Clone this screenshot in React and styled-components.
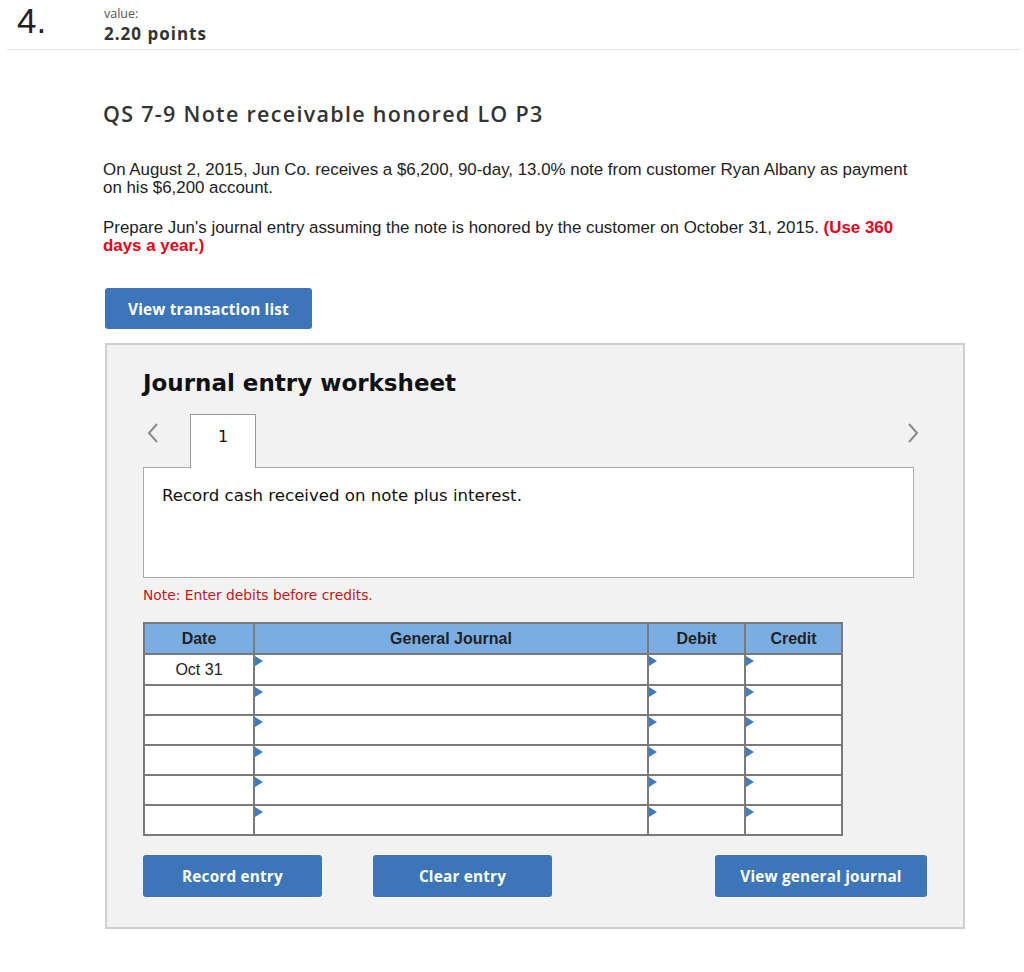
import React from "react";
import styled, { createGlobalStyle } from "styled-components";

const Global = createGlobalStyle`
  html, body { margin: 0; padding: 0; background: #fff; }
  body { font-family: "Liberation Sans", Arial, sans-serif; color: #333; }
  * { box-sizing: border-box; }
`;

const Page = styled.div`
  width: 1024px;
  min-height: 972px;
  background: #fff;
`;

const Header = styled.header`
  display: flex;
  align-items: flex-start;
  height: 50px;
  margin: 0 4px 0 7px;
  border-bottom: 1px solid #e3e3e3;
`;

const Number = styled.div`
  width: 97px;
  padding-left: 10px;
  padding-top: 2px;
  font-family: "Liberation Sans", Arial, sans-serif;
  font-size: 35px;
  line-height: 38px;
  color: #222;
`;

const ValueBox = styled.div`
  display: flex;
  flex-direction: column;
  padding-top: 6px;
`;

const ValueLabel = styled.span`
  font-family: "Open Sans", sans-serif;
  font-size: 12.5px;
  line-height: 16px;
  color: #555;
`;

const Points = styled.span`
  font-family: "Open Sans", sans-serif;
  font-weight: 700;
  font-size: 17px;
  line-height: 24px;
  letter-spacing: 1px;
  color: #333;
`;

const Main = styled.main`
  padding: 50px 0 40px 103px;
`;

const Title = styled.h2`
  margin: 0;
  font-family: "Open Sans", sans-serif;
  font-weight: 600;
  font-size: 21.5px;
  line-height: 28px;
  letter-spacing: 1.3px;
  color: #333;
`;

const Para = styled.p`
  margin: ${(p) => p.$top}px 0 0;
  width: 812px;
  font-family: "Liberation Sans", Arial, sans-serif;
  font-size: 16.9px;
  line-height: 18px;
  color: #222;
`;

const Red = styled.b`
  color: #ec0018;
`;

const Button = styled.button`
  display: inline-flex;
  align-items: center;
  justify-content: center;
  width: ${(p) => p.$w}px;
  height: ${(p) => p.$h || 42}px;
  border: none;
  border-radius: 3px;
  background: #3c76b8;
  color: #fff;
  font-family: "Open Sans", sans-serif;
  font-weight: 700;
  font-size: 15.3px;
  letter-spacing: 0.2px;
  cursor: pointer;
  padding: 0;
`;

const TopButtonWrap = styled.div`
  display: flex;
  margin: 33px 0 0 2px;
`;

const Panel = styled.section`
  margin: 14px 0 0 2px;
  width: 860px;
  background: #f2f2f2;
  border: 2px solid #cfcfcf;
  padding: 24px 36px 30px;
`;

const WsTitle = styled.h3`
  margin: 0;
  font-family: "DejaVu Sans", Verdana, sans-serif;
  font-weight: 700;
  font-size: 23px;
  line-height: 28px;
  color: #111;
`;

const TabRow = styled.div`
  display: flex;
  align-items: flex-end;
  margin-top: 17px;
  width: 784px;
  height: 53px;
`;

const Chevron = styled.span`
  display: flex;
  align-items: center;
  align-self: center;
  margin-bottom: 16px;
  color: #888;
`;

const Tab = styled.div`
  margin-left: ${(p) => p.$ml}px;
  width: 66px;
  height: 54px;
  margin-bottom: -1px;
  background: #fff;
  border: 1px solid #999;
  border-bottom: none;
  position: relative;
  z-index: 1;
  text-align: center;
  padding-top: 12px;
  font-family: "DejaVu Sans", Verdana, sans-serif;
  font-size: 16px;
  color: #111;
`;

const Spacer = styled.div`
  flex: 1;
`;

const ContentBox = styled.div`
  width: 771px;
  height: 111px;
  background: #fff;
  border: 1px solid #aaa;
  padding: 18px 18px;
  font-family: "DejaVu Sans", Verdana, sans-serif;
  font-size: 16.6px;
  line-height: 20px;
  color: #111;
`;

const Note = styled.div`
  margin-top: 9px;
  font-family: "DejaVu Sans", Verdana, sans-serif;
  font-size: 13.8px;
  line-height: 16px;
  color: #c4151c;
`;

const Table = styled.table`
  margin-top: 19px;
  width: 698px;
  border-collapse: collapse;
  border: 2px solid #7a7a7a;
  table-layout: fixed;
  font-family: "Liberation Sans", Arial, sans-serif;
`;

const Th = styled.th`
  width: ${(p) => p.$w}px;
  height: 31px;
  background: #7aaee2;
  border: 2px solid #7a7a7a;
  border-left-color: ${(p) => (p.$first ? "#7a7a7a" : "#222")};
  font-size: 16px;
  font-weight: 700;
  color: #222;
  padding: 0;
`;

const Td = styled.td`
  position: relative;
  height: 30px;
  background: #fff;
  border: 2px solid #7a7a7a;
  padding: 0;
  text-align: ${(p) => (p.$center ? "center" : "left")};
  vertical-align: top;
  font-size: 16px;
  line-height: 29px;
  color: #222;
`;

const Marker = styled.span`
  position: absolute;
  left: 0;
  top: 1px;
  width: 0;
  height: 0;
  border-top: 5px solid transparent;
  border-bottom: 5px solid transparent;
  border-left: 8px solid #3d7bc4;
`;

const ButtonRow = styled.div`
  display: flex;
  margin-top: 19px;
`;

const Gap = styled.div`
  width: ${(p) => p.$w}px;
`;

const ChevronLeft = () => (
  <svg width="14" height="22" viewBox="0 0 14 22">
    <path d="M11 2 L3 11 L11 20" fill="none" stroke="#8a8a8a" strokeWidth="2" />
  </svg>
);
const ChevronRight = () => (
  <svg width="14" height="22" viewBox="0 0 14 22">
    <path d="M3 2 L11 11 L3 20" fill="none" stroke="#8a8a8a" strokeWidth="2" />
  </svg>
);

const rows = ["Oct 31", "", "", "", "", ""];

export default function App() {
  return (
    <Page>
      <Global />
      <Header>
        <Number>4.</Number>
        <ValueBox>
          <ValueLabel>value:</ValueLabel>
          <Points>2.20 points</Points>
        </ValueBox>
      </Header>
      <Main>
        <Title>QS 7-9 Note receivable honored LO P3</Title>
        <Para $top={33}>
          On August 2, 2015, Jun Co. receives a $6,200, 90-day, 13.0% note from customer Ryan Albany as payment
          on his $6,200 account.
        </Para>
        <Para $top={22}>
          Prepare Jun's journal entry assuming the note is honored by the customer on October 31, 2015.{" "}
          <Red>(Use 360 days a year.)</Red>
        </Para>
        <TopButtonWrap>
          <Button $w={207} $h={41}>View transaction list</Button>
        </TopButtonWrap>
        <Panel>
          <WsTitle>Journal entry worksheet</WsTitle>
          <TabRow>
            <Chevron style={{ marginLeft: 3 }}>
              <ChevronLeft />
            </Chevron>
            <Tab $ml={30}>1</Tab>
            <Spacer />
            <Chevron style={{ marginRight: 7 }}>
              <ChevronRight />
            </Chevron>
          </TabRow>
          <ContentBox>Record cash received on note plus interest.</ContentBox>
          <Note>Note: Enter debits before credits.</Note>
          <Table>
            <thead>
              <tr>
                <Th $w={110} $first>Date</Th>
                <Th $w={394}>General Journal</Th>
                <Th $w={97}>Debit</Th>
                <Th $w={97}>Credit</Th>
              </tr>
            </thead>
            <tbody>
              {rows.map((d, i) => (
                <tr key={i}>
                  <Td $center>{d}</Td>
                  <Td><Marker /></Td>
                  <Td><Marker /></Td>
                  <Td><Marker /></Td>
                </tr>
              ))}
            </tbody>
          </Table>
          <ButtonRow>
            <Button $w={179}>Record entry</Button>
            <Gap $w={51} />
            <Button $w={179}>Clear entry</Button>
            <Spacer />
            <Button $w={212}>View general journal</Button>
          </ButtonRow>
        </Panel>
      </Main>
    </Page>
  );
}
